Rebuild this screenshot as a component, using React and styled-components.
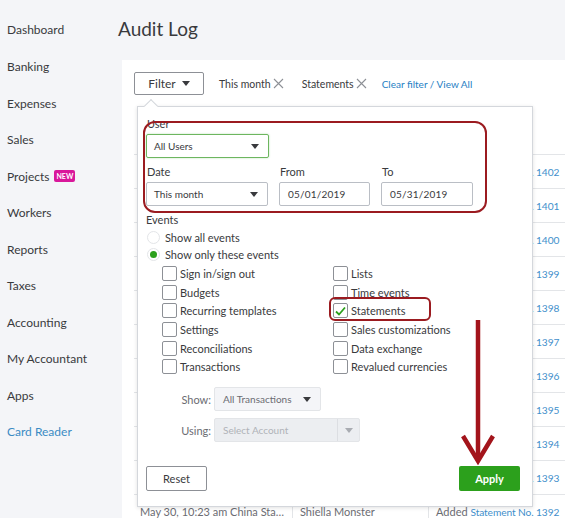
import styled, { createGlobalStyle } from 'styled-components';

const GlobalStyle = createGlobalStyle`
  * { box-sizing: border-box; }
  body {
    margin: 0;
    font-family: Lato, "Noto Sans", sans-serif;
    color: #393a3d;
    background: #f4f5f8;
  }
`;

const navItems = [
  'Dashboard', 'Banking', 'Expenses', 'Sales', 'Projects', 'Workers',
  'Reports', 'Taxes', 'Accounting', 'My Accountant', 'Apps', 'Card Reader',
];

const leftEvents = ['Sign in/sign out', 'Budgets', 'Recurring templates', 'Settings', 'Reconciliations', 'Transactions'];
const rightEvents = ['Lists', 'Time events', 'Statements', 'Sales customizations', 'Data exchange', 'Revalued currencies'];

const rows = [1402, 1401, 1400, 1399, 1398, 1397, 1396, 1395, 1394, 1393, 1392];

function Caret({ color = '#393a3d' }) {
  return (
    <svg width="8" height="5" viewBox="0 0 8 5">
      <path d="M0 0 L8 0 L4 5 Z" fill={color} />
    </svg>
  );
}

function CloseX() {
  return (
    <svg width="11" height="11" viewBox="0 0 11 11">
      <path d="M1 1 L10 10 M10 1 L1 10" stroke="#8d9096" strokeWidth="1.1" fill="none" />
    </svg>
  );
}

export default function App() {
  return (
    <Page>
      <GlobalStyle />
      <Sidebar>
        {navItems.map((item) => (
          <NavItem key={item} active={item === 'Card Reader'}>
            {item}
            {item === 'Projects' && <NewBadge>NEW</NewBadge>}
          </NavItem>
        ))}
      </Sidebar>

      <Main>
        <Title>Audit Log</Title>
        <Panel>
          <FilterBar>
            <FilterButton>
              Filter <Caret />
            </FilterButton>
            <Chip gap={15}>This month <CloseX /></Chip>
            <Chip gap={18}>Statements <CloseX /></Chip>
            <ClearLink>Clear filter / View All</ClearLink>
          </FilterBar>

          <Table>
            <HeaderRow>
              <Cell>DATE CHANGED</Cell>
              <Cell divider>USER</Cell>
              <Cell divider>EVENT</Cell>
            </HeaderRow>
            {rows.map((n) => (
              <Row key={n}>
                <Cell muted>May 30, 10:23 am China Standard Time</Cell>
                <Cell divider muted>Shiella Monster</Cell>
                <Cell divider muted clip>
                  Added <Link>Statement No. {n}</Link>
                </Cell>
              </Row>
            ))}
          </Table>

          <Popup>
            <Notch />
            <Label>User</Label>
            <Select width={123} focused>
              <span>All Users</span>
              <Caret />
            </Select>

            <DateRow>
              <Field>
                <Label>Date</Label>
                <Select width={122}>
                  <span>This month</span>
                  <Caret />
                </Select>
              </Field>
              <Field>
                <Label>From</Label>
                <Input width={91}>05/01/2019</Input>
              </Field>
              <Field>
                <Label>To</Label>
                <Input width={92}>05/31/2019</Input>
              </Field>
            </DateRow>

            <SectionLabel>Events</SectionLabel>
            <RadioGroup>
              <RadioRow>
                <Radio />
                Show all events
              </RadioRow>
              <RadioRow>
                <Radio checked />
                Show only these events
              </RadioRow>
            </RadioGroup>

            <EventGrid>
              {[...leftEvents, ...rightEvents].map((ev) => (
                <CheckRow key={ev}>
                  <Checkbox>
                    {ev === 'Statements' && (
                      <svg width="11" height="10" viewBox="0 0 11 10">
                        <path d="M1 5.5 L4 8.5 L10 1.5" stroke="#2ca01c" strokeWidth="1.8" fill="none" />
                      </svg>
                    )}
                  </Checkbox>
                  {ev}
                </CheckRow>
              ))}
            </EventGrid>

            <OptionRow first>
              <OptionLabel>Show:</OptionLabel>
              <SoftSelect width={107}>
                <span>All Transactions</span>
                <Caret />
              </SoftSelect>
            </OptionRow>
            <OptionRow>
              <OptionLabel>Using:</OptionLabel>
              <DisabledSelect>
                <span>Select Account</span>
                <DisabledCaret>
                  <Caret color="#a9acb2" />
                </DisabledCaret>
              </DisabledSelect>
            </OptionRow>

            <ButtonRow>
              <ResetButton>Reset</ResetButton>
              <ApplyButton>Apply</ApplyButton>
            </ButtonRow>

            <Highlight left={5} top={14} width={344} height={92} radius={12} />
            <Highlight left={191} top={190} width={102} height={24} radius={6} />
            <Arrow width="38" height="145" viewBox="0 0 38 145">
              <path d="M18 0 L18 138" stroke="#a3141b" strokeWidth="4.5" fill="none" />
              <path d="M3 116 L18 141 L33 116" stroke="#a3141b" strokeWidth="4.5" fill="none" strokeLinejoin="miter" />
            </Arrow>
          </Popup>
        </Panel>
      </Main>
    </Page>
  );
}

const Page = styled.div`
  display: flex;
  height: 518px;
  overflow: hidden;
`;

const Sidebar = styled.nav`
  width: 112px;
  flex-shrink: 0;
  padding-top: 11.7px;
  display: flex;
  flex-direction: column;
`;

const NavItem = styled.div`
  height: 36.55px;
  padding-left: 7px;
  display: flex;
  align-items: center;
  gap: 5px;
  font-size: 12px;
  white-space: nowrap;
  color: ${(p) => (p.active ? '#3b8bc4' : '#393a3d')};
`;

const NewBadge = styled.span`
  background: #d9189b;
  color: #fff;
  font-size: 7px;
  font-weight: 700;
  padding: 2px 2px;
  border-radius: 2px;
  line-height: 8px;
`;

const Main = styled.main`
  flex: 1;
  display: flex;
  flex-direction: column;
  min-width: 0;
`;

const Title = styled.h1`
  margin: 0;
  height: 60px;
  padding: 17px 0 0 6px;
  font-size: 19px;
  line-height: 24px;
  font-weight: 400;
  color: #393a3d;
`;

const Panel = styled.section`
  flex: 1;
  margin-left: 10px;
  background: #fff;
  position: relative;
  padding: 12px 0 0 12px;
  overflow: hidden;
`;

const FilterBar = styled.div`
  display: flex;
  align-items: center;
  height: 23px;
`;

const FilterButton = styled.button`
  width: 70px;
  height: 23px;
  border: 1px solid #8d9096;
  border-radius: 2px;
  background: #fff;
  font-family: inherit;
  font-size: 12px;
  color: #393a3d;
  display: flex;
  align-items: center;
  justify-content: center;
  gap: 6px;
  padding: 0;
`;

const Chip = styled.span`
  margin-left: ${(p) => p.gap}px;
  display: flex;
  align-items: center;
  gap: 2px;
  font-size: 10.5px;
  color: #393a3d;
`;

const ClearLink = styled.a`
  margin-left: 15px;
  font-size: 10px;
  color: #1f80c4;
`;

const Table = styled.div`
  width: 100%;
`;

const Row = styled.div`
  display: grid;
  grid-template-columns: 158px 136px 1fr;
  height: 34px;
  border-bottom: 1px solid #e3e5e8;
`;

const HeaderRow = styled(Row)`
  height: 60px;
  align-items: end;
  font-weight: 700;
`;

const Cell = styled.div`
  line-height: 33px;
  padding: 0 ${(p) => (p.clip ? 0 : 4)}px 0 ${(p) => (p.divider ? 7 : 6)}px;
  white-space: nowrap;
  overflow: hidden;
  text-overflow: ${(p) => (p.clip ? 'clip' : 'ellipsis')};
  font-size: 11px;
  color: ${(p) => (p.muted ? '#6b6c72' : '#393a3d')};
  border-left: ${(p) => (p.divider ? '1px solid #e3e5e8' : 'none')};
  ${HeaderRow} & {
    border-left: none;
    font-size: 10px;
  }
`;

const Link = styled.span`
  color: #3f8fcb;
  font-size: 10.2px;
  letter-spacing: -0.1px;
`;

const Popup = styled.div`
  position: absolute;
  left: 15px;
  top: 46px;
  width: 396px;
  height: 401px;
  background: #fff;
  border: 1px solid #d4d7dc;
  box-shadow: 0 1px 4px rgba(0, 0, 0, 0.12);
  padding: 10px 12px 15px 8px;
  display: flex;
  flex-direction: column;
  align-items: flex-start;

  > * {
    flex-shrink: 0;
  }
`;

const Notch = styled.div`
  position: absolute;
  left: 8px;
  top: -6px;
  width: 10px;
  height: 10px;
  background: #fff;
  border-top: 1px solid #d4d7dc;
  border-left: 1px solid #d4d7dc;
  transform: rotate(45deg);
`;

const Label = styled.div`
  font-size: 11px;
  line-height: 14px;
  margin-bottom: 3px;
  color: #393a3d;
  padding-left: 1px;
`;

const Select = styled.div`
  width: ${(p) => p.width}px;
  height: 24px;
  border: 1px solid ${(p) => (p.focused ? '#6db65f' : '#babec5')};
  box-shadow: ${(p) => (p.focused ? '0 0 2px rgba(44,160,28,0.35)' : 'none')};
  border-radius: 2px;
  display: flex;
  align-items: center;
  justify-content: space-between;
  padding: 0 9px 0 7px;
  font-size: 10px;
  color: #393a3d;
`;

const Input = styled.div`
  width: ${(p) => p.width}px;
  height: 24px;
  border: 1px solid #babec5;
  border-radius: 2px;
  display: flex;
  align-items: center;
  padding-left: 8px;
  font-size: 10px;
  color: #393a3d;
  letter-spacing: 0.2px;
`;

const DateRow = styled.div`
  display: flex;
  gap: 11px;
  margin-top: 7px;
`;

const Field = styled.div`
  display: flex;
  flex-direction: column;
`;

const SectionLabel = styled.div`
  margin-top: 7px;
  font-size: 11px;
  line-height: 14px;
`;

const RadioGroup = styled.div`
  margin-top: 1.5px;
  display: flex;
  flex-direction: column;
`;

const RadioRow = styled.div`
  height: 17px;
  display: flex;
  align-items: center;
  gap: 5px;
  font-size: 11px;
  padding-left: 1px;
`;

const Radio = styled.span`
  width: 13px;
  height: 13px;
  border-radius: 50%;
  border: 1px solid #e3e5e8;
  display: flex;
  align-items: center;
  justify-content: center;
  &::after {
    content: '';
    width: 7px;
    height: 7px;
    border-radius: 50%;
    background: ${(p) => (p.checked ? '#2ca01c' : 'transparent')};
  }
`;

const EventGrid = styled.div`
  margin-top: 1.5px;
  padding-left: 16px;
  display: grid;
  grid-template-columns: 171px 1fr;
  grid-template-rows: repeat(6, 18.7px);
  grid-auto-flow: column;
`;

const CheckRow = styled.div`
  display: flex;
  align-items: center;
  gap: 3px;
  font-size: 11px;
  white-space: nowrap;
`;

const Checkbox = styled.span`
  width: 15px;
  height: 15px;
  border: 1px solid #8d9096;
  border-radius: 2px;
  display: flex;
  align-items: center;
  justify-content: center;
  background: #fff;
`;

const OptionRow = styled.div`
  display: flex;
  align-items: center;
  margin-top: ${(p) => (p.first ? 11 : 7)}px;
`;

const OptionLabel = styled.span`
  width: 68px;
  padding-right: 3px;
  text-align: right;
  font-size: 11px;
  color: #6b6c72;
`;

const SoftSelect = styled(Select)`
  background: #f4f5f8;
  border-color: #e3e5e8;
  color: #6b6c72;
  padding-left: 8px;
`;

const DisabledSelect = styled.div`
  width: 146px;
  height: 24px;
  background: #eceef1;
  border: 1px solid #e3e5e8;
  border-radius: 2px;
  display: flex;
  align-items: center;
  justify-content: space-between;
  padding-left: 8px;
  font-size: 10px;
  color: #b0b3b8;
`;

const DisabledCaret = styled.span`
  width: 22px;
  height: 100%;
  border-left: 1px solid #dcdee2;
  display: flex;
  align-items: center;
  justify-content: center;
`;

const ButtonRow = styled.div`
  margin-top: 24px;
  width: 100%;
  display: flex;
  justify-content: space-between;
`;

const ResetButton = styled.button`
  width: 61px;
  height: 25px;
  border: 1px solid #8d9096;
  border-radius: 2px;
  background: #fff;
  font-family: inherit;
  font-size: 11px;
  color: #393a3d;
  padding: 0;
`;

const ApplyButton = styled.button`
  width: 61px;
  height: 25px;
  border: none;
  border-radius: 2px;
  background: #2ca01c;
  font-family: inherit;
  font-size: 11px;
  font-weight: 700;
  color: #fff;
  padding: 0;
`;

const Highlight = styled.div`
  position: absolute;
  left: ${(p) => p.left}px;
  top: ${(p) => p.top}px;
  width: ${(p) => p.width}px;
  height: ${(p) => p.height}px;
  border: 2px solid #9b1b20;
  border-radius: ${(p) => p.radius}px;
  pointer-events: none;
`;

const Arrow = styled.svg`
  position: absolute;
  left: 322px;
  top: 213px;
`;
